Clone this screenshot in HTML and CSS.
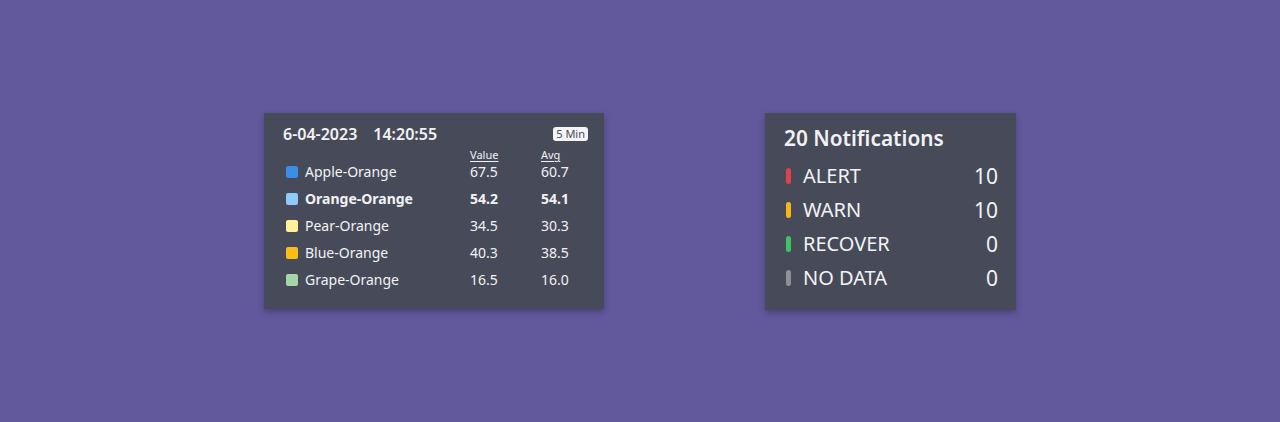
FILE: index.html
```html
<!DOCTYPE html>
<html lang="en">
<head>
<meta charset="utf-8">
<title>Widgets</title>
<link rel="stylesheet" href="styles.css">
</head>
<body>
<main class="stage">
  <section class="card stats">
    <header class="stats-head">
      <div class="stamp"><span class="date">6-04-2023</span><span class="time">14:20:55</span></div>
      <span class="badge">5 Min</span>
    </header>
    <div class="table">
      <span></span><span class="col-h">Value</span><span class="col-h">Avg</span>
      <span class="name"><i class="sw sw-apple"></i>Apple-Orange</span><span>67.5</span><span>60.7</span>
      <span class="name strong"><i class="sw sw-orange"></i>Orange-Orange</span><span class="strong">54.2</span><span class="strong">54.1</span>
      <span class="name"><i class="sw sw-pear"></i>Pear-Orange</span><span>34.5</span><span>30.3</span>
      <span class="name"><i class="sw sw-blue"></i>Blue-Orange</span><span>40.3</span><span>38.5</span>
      <span class="name"><i class="sw sw-grape"></i>Grape-Orange</span><span>16.5</span><span>16.0</span>
    </div>
  </section>
  <section class="card notes">
    <h2 class="notes-title">20 Notifications</h2>
    <ul class="note-list">
      <li class="note"><i class="bar bar-alert"></i><span class="label">ALERT</span><span class="count">10</span></li>
      <li class="note"><i class="bar bar-warn"></i><span class="label">WARN</span><span class="count">10</span></li>
      <li class="note"><i class="bar bar-recover"></i><span class="label">RECOVER</span><span class="count">0</span></li>
      <li class="note"><i class="bar bar-nodata"></i><span class="label">NO DATA</span><span class="count">0</span></li>
    </ul>
  </section>
</main>
</body>
</html>
```

FILE: styles.css
```css
* { box-sizing: border-box; }
html, body { margin: 0; padding: 0; }
body {
  background: #62599c;
  font-family: "Noto Sans", "Open Sans", sans-serif;
  color: #f2f2f4;
  height: 422px;
  overflow: hidden;
}
.stage {
  height: 422px;
  display: flex;
  align-items: center;
  justify-content: center;
  gap: 161px;
}
.card {
  background: #474b59;
  box-shadow: 0 3px 6px rgba(30, 20, 70, 0.35);
}
.stats {
  width: 340px;
  height: 196px;
  padding: 11px 16px 0 19px;
}
.stats-head {
  display: flex;
  justify-content: space-between;
  align-items: center;
  height: 20px;
}
.stamp {
  font-size: 16px;
  font-weight: 600;
  line-height: 20px;
  display: flex;
  gap: 16px;
}
.badge {
  background: #f4f4f6;
  color: #474b59;
  font-size: 11px;
  line-height: 14px;
  padding: 0 3px;
  border-radius: 3px;
}
.table {
  display: grid;
  grid-template-columns: 184px 71px 1fr;
  grid-template-rows: 10px;
  grid-auto-rows: 27px;
  align-items: center;
  margin-left: 3px;
  margin-top: 4px;
  font-size: 14px;
}
.col-h {
  align-self: start;
  height: 14px;
  font-size: 11px;
  line-height: 14px;
  text-decoration: underline;
  text-underline-offset: 2px;
}
.name {
  display: flex;
  align-items: center;
  gap: 7px;
}
.strong { font-weight: 700; }
.sw {
  width: 12px;
  height: 12px;
  border-radius: 2px;
  flex: none;
}
.sw-apple { background: #3a8ee6; }
.sw-orange { background: #90caf9; }
.sw-pear { background: #fff09a; }
.sw-blue { background: #fbbd16; }
.sw-grape { background: #a5d6a7; }

.notes {
  width: 251px;
  height: 197px;
  padding: 11px 18px 0 19px;
}
.notes-title {
  margin: 0;
  font-size: 20.8px;
  font-weight: 600;
  line-height: 28px;
}
.note-list {
  list-style: none;
  margin: 7px 0 0;
  padding: 0;
}
.note {
  display: flex;
  align-items: center;
  height: 34px;
  font-size: 20px;
}
.count { font-size: 21px; }
.bar {
  width: 5px;
  height: 16px;
  border-radius: 3px;
  margin-left: 2px;
  margin-right: 12px;
  flex: none;
}
.bar-alert { background: #e0424a; }
.bar-warn { background: #f8b619; }
.bar-recover { background: #3ac462; }
.bar-nodata { background: #8e8f99; }
.label { flex: 1; }
.count { text-align: right; }
```
